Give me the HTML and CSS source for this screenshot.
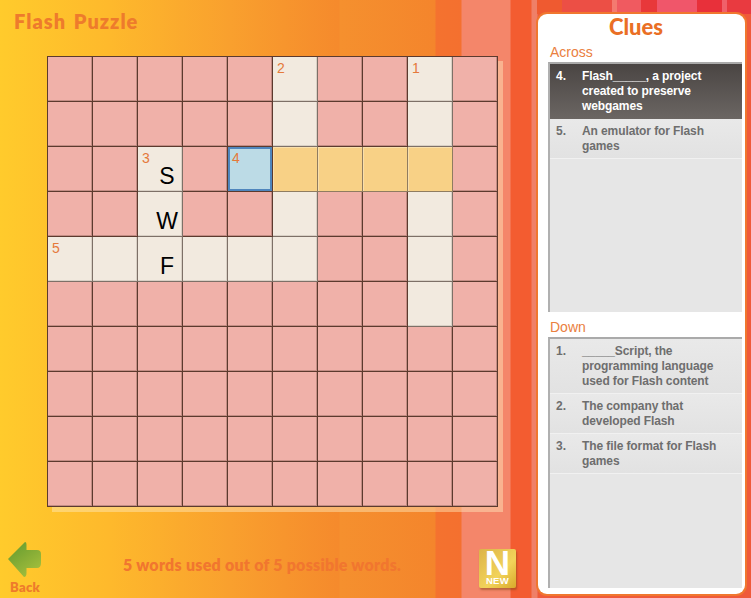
FILE: index.html
```html
<!DOCTYPE html>
<html>
<head>
    <title>Flash Puzzle</title>
    <link rel="stylesheet" href="styles.css">
</head>
<body>
    <div class="stage">
        <div class="game">
            <h1 class="title">Flash Puzzle</h1>
            <div class="board">
                <div class="cell"></div><div class="cell"></div><div class="cell"></div><div class="cell"></div><div class="cell"></div><div class="cell open"><span class="num">2</span></div><div class="cell"></div><div class="cell"></div><div class="cell open"><span class="num">1</span></div><div class="cell"></div>

                <div class="cell"></div><div class="cell"></div><div class="cell"></div><div class="cell"></div><div class="cell"></div><div class="cell open"></div><div class="cell"></div><div class="cell"></div><div class="cell open"></div><div class="cell"></div>

                <div class="cell"></div><div class="cell"></div><div class="cell open"><span class="num">3</span><span class="letter">S</span></div><div class="cell"></div><div class="cell current"><span class="num">4</span></div><div class="cell word"></div><div class="cell word"></div><div class="cell word"></div><div class="cell word"></div><div class="cell"></div>

                <div class="cell"></div><div class="cell"></div><div class="cell open"><span class="letter">W</span></div><div class="cell"></div><div class="cell"></div><div class="cell open"></div><div class="cell"></div><div class="cell"></div><div class="cell open"></div><div class="cell"></div>

                <div class="cell open"><span class="num">5</span></div><div class="cell open"></div><div class="cell open"><span class="letter">F</span></div><div class="cell open"></div><div class="cell open"></div><div class="cell open"></div><div class="cell"></div><div class="cell"></div><div class="cell open"></div><div class="cell"></div>

                <div class="cell"></div><div class="cell"></div><div class="cell"></div><div class="cell"></div><div class="cell"></div><div class="cell"></div><div class="cell"></div><div class="cell"></div><div class="cell open"></div><div class="cell"></div>

                <div class="cell"></div><div class="cell"></div><div class="cell"></div><div class="cell"></div><div class="cell"></div><div class="cell"></div><div class="cell"></div><div class="cell"></div><div class="cell"></div><div class="cell"></div>

                <div class="cell"></div><div class="cell"></div><div class="cell"></div><div class="cell"></div><div class="cell"></div><div class="cell"></div><div class="cell"></div><div class="cell"></div><div class="cell"></div><div class="cell"></div>

                <div class="cell"></div><div class="cell"></div><div class="cell"></div><div class="cell"></div><div class="cell"></div><div class="cell"></div><div class="cell"></div><div class="cell"></div><div class="cell"></div><div class="cell"></div>

                <div class="cell"></div><div class="cell"></div><div class="cell"></div><div class="cell"></div><div class="cell"></div><div class="cell"></div><div class="cell"></div><div class="cell"></div><div class="cell"></div><div class="cell"></div>
            </div>
            <div class="footer">
                <div class="back">
                    <svg width="40" height="38" viewBox="0 0 40 38">
                        <defs>
                            <linearGradient id="arrowFill" x1="0" y1="0" x2="0.7" y2="1">
                                <stop offset="0" stop-color="#5f9a2e"/>
                                <stop offset="0.55" stop-color="#86ad36"/>
                                <stop offset="1" stop-color="#a4bf3c"/>
                            </linearGradient>
                        </defs>
                        <path d="M17 1 L0 18 L16 36 Q18.500 36 18.500 32 L18.500 27 L29 27 Q33 27 33 22 L33 13 Q33 9 29 9 L18.500 9 L18.500 4 Q18.500 1 17 1 Z" fill="url(#arrowFill)"/>
                    </svg>
                    <span>Back</span>
                </div>
                <p class="status">5 words used out of 5 possible words.</p>
                <div class="new-btn">
                    <span class="new-n">N</span>
                    <span class="new-label">NEW</span>
                </div>
            </div>
        </div>
        <div class="clues">
            <h2>Clues</h2>
            <h3>Across</h3>
            <ol class="clue-list across">
                <li class="clue active"><b>4.</b><span>Flash_____, a project created to preserve webgames</span></li>
                <li class="clue"><b>5.</b><span>An emulator for Flash games</span></li>
            </ol>
            <h3>Down</h3>
            <ol class="clue-list down">
                <li class="clue"><b>1.</b><span>_____Script, the programming language used for Flash content</span></li>
                <li class="clue"><b>2.</b><span>The company that developed Flash</span></li>
                <li class="clue"><b>3.</b><span>The file format for Flash games</span></li>
            </ol>
        </div>
    </div>
</body>
</html>
```
FILE: styles.css
```css
* { box-sizing: border-box; }
html, body { margin: 0; height: 100%; overflow: hidden; }
body { font-family: "Liberation Sans", Arial, sans-serif; }

.stage {
    width: 751px;
    height: 598px;
    display: flex;
    background:
        linear-gradient(90deg, transparent 537px, #ef5a30 537px, #ef5a30 562px, #ec4f45 562px, #ec4f45 612px, #f47a70 612px, #f47a70 617px, #f05a60 617px, #f05a60 641px, #e8383a 641px, #e8383a 657px, #f0566a 657px, #f0566a 697px, #e8303a 697px, #e8303a 722px, #f0606a 722px, #f0606a 727px, #e93a40 727px) top / 100% 14px no-repeat,
        linear-gradient(90deg, #ffcb2c 0, #feb92c 110px, #f9a02e 230px, #f58a2c 339px, #f5902e 340px, #f4852c 435px, #f4722f 436px, #f4702f 461px, #f4866a 462px, #f4866a 510px, #f35c30 511px, #f35c30 531px, #ef8068 532px, #ef8068 537px, #ef5a3a 538px);
}

.game {
    width: 538px;
    flex: none;
}

.title {
    margin: 0;
    padding: 9px 0 0 14px;
    height: 56px;
    font-family: Lato, "Open Sans", sans-serif;
    font-size: 20px;
    font-weight: 800;
    letter-spacing: 1px;
    word-spacing: 2px;
    color: #ee7b2c;
}

.board {
    margin-left: 47px;
    width: 451px;
    height: 451px;
    display: grid;
    grid-template-columns: repeat(10, 45px);
    grid-auto-rows: 45px;
    background: #f0b1a9;
    border-top: 1px solid #5c3a2e;
    border-left: 1px solid #5c3a2e;
    box-shadow: 5px 5px 0 rgba(255, 235, 190, 0.45);
}

.cell {
    position: relative;
    background: #f0b1a9;
    border-right: 1px solid #5c3a2e;
    border-bottom: 1px solid #5c3a2e;
    box-shadow: inset -1px -1px 0 rgba(92, 58, 46, 0.3);
}
.cell.open { background: #f2eadf; border-color: #7d7067; box-shadow: inset -1px -1px 0 rgba(120, 105, 95, 0.2); }
.cell.word { background: #f8d186; border-color: #8f7c60; box-shadow: inset 1px 1px 0 rgba(255, 255, 255, 0.3); }
.cell.current { background: #bcdbe6; box-shadow: inset 0 0 0 2px #4f86bd; }

.num {
    position: absolute;
    left: 4px;
    top: 3px;
    font-size: 14px;
    color: #e5793a;
}
.letter {
    position: absolute;
    right: 1px;
    bottom: 1px;
    width: 28px;
    text-align: center;
    font-size: 23px;
    color: #000;
}

.footer {
    display: flex;
    align-items: flex-start;
    height: 91px;
    padding-top: 34px;
}
.back {
    width: 47px;
    margin-left: 8px;
    margin-right: -1px;
    display: flex;
    flex-direction: column;
    color: #ee7b2c;
    font-family: Lato, sans-serif;
    font-weight: 800;
    font-size: 13px;
    line-height: 14px;
}
.back span { margin: 1px 0 0 2px; letter-spacing: 0.3px; }
.status {
    margin: 14px 0 0 69px;
    width: 356px;
    font-family: Lato, sans-serif;
    font-size: 16px;
    font-weight: 800;
    letter-spacing: 0.25px;
    color: #f1762f;
    white-space: nowrap;
}
.new-btn {
    width: 37px;
    height: 39px;
    margin-top: 8px;
    border-radius: 2px;
    background: linear-gradient(135deg, #dcb349, #f2d35a 60%, #d8a92a);
    box-shadow: 1px 2px 2px rgba(130, 70, 20, 0.5);
    color: #fff;
    text-align: center;
    font-weight: bold;
}
.new-n { display: block; font-size: 35px; line-height: 28px; height: 27px; }
.new-label { display: block; font-size: 9.500px; line-height: 10px; letter-spacing: 0.3px; }

.clues {
    width: 207px;
    height: 580px;
    margin-top: 14px;
    padding: 0 3px 6px 10px;
    background: #fff;
    border-radius: 9px;
    box-shadow: 0 0 0 2px #f0772f;
    display: flex;
    flex-direction: column;
}
.clues h2 {
    margin: 0;
    height: 24px;
    padding: 1px 18px 0 0;
    text-align: center;
    font-family: Lato, sans-serif;
    font-size: 22px;
    line-height: 24px;
    font-weight: 900;
    color: #ea6f25;
}
.clues h3 {
    margin: 0;
    height: 24px;
    padding: 6px 0 0 2px;
    font-size: 14px;
    line-height: 16px;
    font-weight: normal;
    color: #ea8040;
}
.clue-list {
    margin: 0;
    padding: 0;
    list-style: none;
    background: #e6e6e6;
    border-top: 2px solid #aaa;
    border-left: 2px solid #b0b0b0;
}
.across { height: 250px; margin-bottom: 1px; }
.down { flex: 1; }
.clue {
    display: flex;
    padding: 5px 8px 4px 6px;
    font-size: 12px;
    line-height: 15px;
    font-weight: bold;
    color: #6e6e6e;
    border-bottom: 1px solid #f1f1f1;
    background: linear-gradient(#e9e9e9, #e2e2e2);
}
.clue b { width: 26px; flex: none; }
.clue span { width: 145px; letter-spacing: -0.1px; }
.clue.active {
    color: #fff;
    background: linear-gradient(#4a4543, #6b6663);
    border-bottom: 0;
    padding-bottom: 5px;
}
```
